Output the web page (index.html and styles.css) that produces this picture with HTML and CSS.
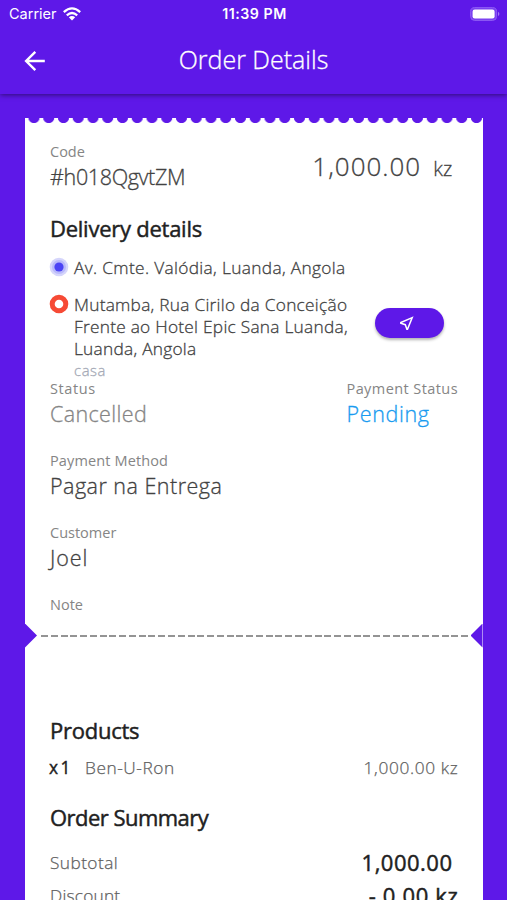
FILE: index.html
```html
<!DOCTYPE html>
<html lang="en">
<head>
<meta charset="utf-8">
<title>Order Details</title>
<link rel="stylesheet" href="styles.css">
</head>
<body>
<header class="header">
  <div class="status-bar">
    <div class="carrier"><span>Carrier</span>
      <svg width="18" height="14" viewBox="0 0 18 14" fill="none" stroke="#fff" stroke-width="2.3"><path d="M.8 5.1Q9-2.3 17.2 5.1M3.8 8.3Q9 3.7 14.2 8.3"/><path d="M9 13.5 5.8 10.3Q9 7.7 12.2 10.3Z" fill="#fff" stroke="none"/></svg>
    </div>
    <span class="time">11:39 PM</span>
    <svg class="battery" width="30" height="14" viewBox="0 0 30 14"><rect x=".6" y=".6" width="26" height="12.8" rx="4" fill="#7a3ff0" stroke="#8e5cf4"/><rect x="2.6" y="2.5" width="22" height="9" rx="2.2" fill="#fff"/><path d="M28 4.8q2.8 2.2 0 4.4z" fill="#a17af4"/></svg>
  </div>
  <div class="app-bar">
    <svg class="back" width="22" height="22" viewBox="0 0 22 22" fill="none" stroke="#fff" stroke-width="2.4"><path d="M20.8 11H2.5M11.3 1.8 2.1 11l9.2 9.2"/></svg>
    <h1 class="title">Order Details</h1>
  </div>
</header>
<main class="ticket">
  <div class="scallop"></div>
  <section class="upper">
    <div class="row code-row">
      <div><div class="label code-label">Code</div><div class="value code">#h018QgvtZM</div></div>
      <div class="total"><span class="amount">1,000.00</span><span class="currency">kz</span></div>
    </div>
    <h2 class="heading delivery">Delivery details</h2>
    <div class="place origin">
      <svg class="marker" width="20" height="20" viewBox="0 0 20 20"><circle cx="10" cy="10" r="9.3" fill="#d5d5fb"/><circle cx="10" cy="10" r="7" fill="#b9b9fa"/><circle cx="10" cy="10" r="4.6" fill="#4b43f5"/></svg>
      <div class="address from">Av. Cmte. Valódia, Luanda, Angola</div>
    </div>
    <div class="place destination">
      <svg class="marker" width="20" height="20" viewBox="0 0 20 20"><circle cx="10" cy="10" r="6.8" fill="#fff" stroke="#f64a35" stroke-width="5"/></svg>
      <div class="address"><div class="to1">Mutamba, Rua Cirilo da Conceição</div><div class="to2">Frente ao Hotel Epic Sana Luanda,</div><div class="to3">Luanda, Angola</div><div class="tag">casa</div></div>
      <button class="navigate" aria-label="Navigate"><svg width="15" height="15" viewBox="0 0 15 15" fill="none" stroke="#fff" stroke-width="1.5" stroke-linejoin="miter"><path d="M13.2 1.6 1.8 6.5v.6l4.5 1.6 1.6 4.5h.6Z"/></svg></button>
    </div>
    <div class="row statuses">
      <div><div class="label status-label">Status</div><div class="value cancelled">Cancelled</div></div>
      <div class="payment"><div class="label pay-label">Payment Status</div><div class="value pending">Pending</div></div>
    </div>
    <div class="field"><div class="label method-label">Payment Method</div><div class="value method">Pagar na Entrega</div></div>
    <div class="field"><div class="label customer-label">Customer</div><div class="value customer">Joel</div></div>
    <div class="label note-label">Note</div>
  </section>
  <div class="perforation"><i class="notch left"></i><i class="dashes"></i><i class="notch right"></i></div>
  <section class="lower">
    <h2 class="heading products">Products</h2>
    <div class="row product"><div class="item"><span class="qty">x 1</span><span class="item-name">Ben-U-Ron</span></div><span class="price">1,000.00 kz</span></div>
    <h2 class="heading summary">Order Summary</h2>
    <div class="row line"><span class="subtotal">Subtotal</span><span class="sum subtotal-sum">1,000.00</span></div>
    <div class="row line"><span class="discount">Discount</span><span class="sum discount-sum">- 0.00 kz</span></div>
  </section>
</main>
</body>
</html>
```
FILE: styles.css
```css
* { box-sizing: border-box; }
body { margin: 0; width: 507px; height: 900px; overflow: hidden; background: #5e18e8; color: #424242; font-family: "Open Sans", sans-serif; font-weight: 300; display: flex; flex-direction: column; white-space: nowrap; }
h1, h2 { margin: 0; }
.header { height: 94px; flex: none; color: #fff; box-shadow: 0 1px 5px rgba(0,0,0,.5); }
.status-bar { height: 27px; padding: 0 7px 0 9px; display: grid; grid-template-columns: 1fr auto 1fr; align-items: center; font: 400 14.5px/27px Inter, sans-serif; }
.carrier { display: flex; align-items: center; gap: 6px; }
.time { font-weight: 600; font-size: 14.2px; letter-spacing: .5px; }
.battery { justify-self: end; }
.app-bar { height: 67px; padding: 0 24px; display: grid; grid-template-columns: 22px 1fr 22px; align-items: center; }
.title { text-align: center; font-size: 25px; line-height: 34px; font-weight: 300; padding-bottom: 3px; -webkit-text-stroke: .3px; }
.ticket { margin: 24px 24.5px 0 25px; flex: none; }
.scallop { height: 6px; background: radial-gradient(circle at 50% -.5px, transparent 5.2px, #fff 6px) 1.6px 0 / 14.75px 6px repeat-x; }
.upper { height: 500px; background: #fff; padding: 16px 25px 0; }
.lower { height: 300px; background: #fff; padding: 68px 25px 0; }
.row { display: flex; justify-content: space-between; }
.label { font-size: 14.5px; line-height: 24px; color: #858585; font-weight: 400; }
.value { font-size: 21.5px; line-height: 25px; letter-spacing: .48px; -webkit-text-stroke: .3px; }
.code { letter-spacing: -.35px; }
.code-row { height: 61px; }
.total { display: flex; align-items: baseline; gap: 12px; padding: 8px 5px 0 0; line-height: 36px; -webkit-text-stroke: .3px; }
.amount { font-size: 26px; letter-spacing: 1px; }
.currency { font-size: 20px; letter-spacing: .2px; }
.heading { font-size: 22px; line-height: 30px; font-weight: 400; color: #212121; letter-spacing: -.25px; -webkit-text-stroke: .45px; }
.delivery { margin-top: 12px; }
.place { display: flex; }
.marker { flex: none; margin-left: -1px; }
.address { width: 273px; font-size: 17.3px; line-height: 22px; margin-left: 5px; letter-spacing: .26px; -webkit-text-stroke: .3px; }
.from { letter-spacing: .34px; }
.origin { margin-top: 14px; height: 37px; }
.destination { height: 83px; }
.tag { font-size: 14.8px; line-height: 20px; color: #a5a9b6; letter-spacing: .6px; }
.navigate { margin: 14px 0 0 28px; width: 69px; height: 30px; border: 0; border-radius: 15px; background: #5e18e8; box-shadow: 0 2px 3px rgba(0,0,0,.3); padding: 0 6px 0 0; display: grid; place-items: center; }
.payment { width: 111px; }
.status-label { letter-spacing: .6px; }
.pay-label { letter-spacing: .42px; }
.method-label { letter-spacing: .13px; }
.statuses { height: 72px; }
.field { height: 72px; }
.cancelled { color: #858585; letter-spacing: .37px; }
.pending { color: #199bf0; letter-spacing: .65px; }
.customer { letter-spacing: .9px; }
.perforation { height: 23px; background: #fff; display: flex; align-items: center; justify-content: space-between; }
.notch { width: 12px; height: 24px; background: #5e18e8; }
.left { clip-path: polygon(0 0, 100% 50%, 0 100%); }
.right { clip-path: polygon(100% 0, 0 50%, 100% 100%); }
.dashes { flex: 1; margin-left: 4px; height: 2px; background: repeating-linear-gradient(90deg, #949494 0 7px, transparent 7px 9.77px); }
.product { font-size: 17.3px; line-height: 24px; margin-top: 11px; color: #616161; -webkit-text-stroke: .25px; }
.item { display: flex; }
.qty { width: 35px; font-weight: 400; color: #212121; word-spacing: -2px; margin-left: -1px; margin-right: 1px; -webkit-text-stroke: .4px; }
.item-name { letter-spacing: .55px; }
.price { letter-spacing: .65px; margin-right: -1px; }
.summary { margin-top: 22px; letter-spacing: -.53px; }
.line { font-size: 17.3px; line-height: 30px; height: 33px; color: #616161; -webkit-text-stroke: .25px; }
.summary + .line { margin-top: 15px; }
.subtotal, .discount { padding-top: 1px; letter-spacing: .42px; }
.discount { letter-spacing: .2px; }
.sum { font-size: 22px; font-weight: 400; color: #212121; letter-spacing: .5px; -webkit-text-stroke: .45px; }
.subtotal-sum { margin-right: 5px; }
.discount-sum { margin-right: -1px; letter-spacing: .65px; }
```
